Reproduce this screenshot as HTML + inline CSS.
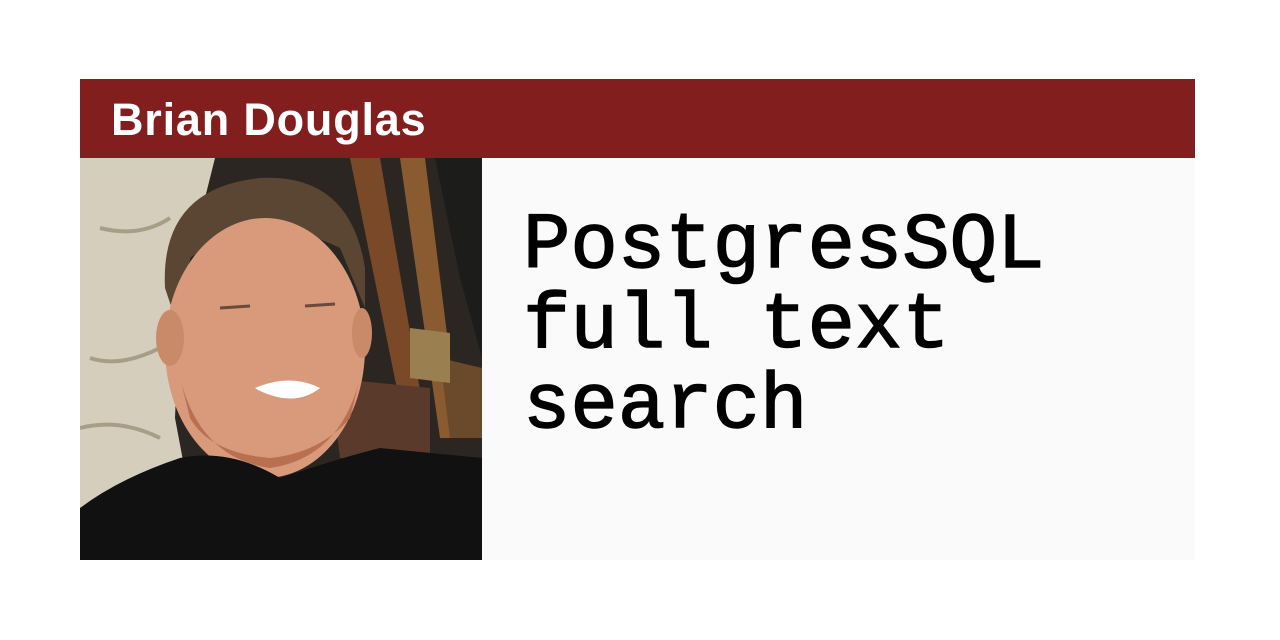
<!DOCTYPE html>
<html><head><style>
html,body{margin:0;padding:0;background:#fff;width:1280px;height:640px;overflow:hidden}
.bar{position:absolute;left:80px;top:79px;width:1115px;height:79px;background:#821e1e}
.bar span{position:absolute;left:31px;top:15px;font:bold 45px "Liberation Sans",sans-serif;color:#fff;letter-spacing:0.8px}
.photo{position:absolute;left:80px;top:158px;width:402px;height:402px;overflow:hidden}
.panel{position:absolute;left:482px;top:158px;width:713px;height:402px;background:#fafafa}
.t{position:absolute;left:523px;top:206px;font:79px/80px "Liberation Mono",monospace;color:#000;white-space:pre;-webkit-text-stroke:1.5px #000}
</style></head><body>
<div class="bar"><span>Brian Douglas</span></div>
<div class="photo">
<svg width="402" height="402" viewBox="0 0 402 402">
<rect width="402" height="402" fill="#2b2622"/>
<path d="M0 0H135L120 60L100 140L95 260L110 340L0 380Z" fill="#d6cebd"/>
<path d="M20 70Q60 80 90 60M10 200Q40 210 80 190M0 270Q40 260 80 280" stroke="#a89e88" stroke-width="4" fill="none"/>
<path d="M270 0H300L350 290L330 295Z" fill="#7a4a28"/>
<path d="M320 0H345L380 280H360Z" fill="#8a5a30"/>
<path d="M355 0H402V200L380 120Z" fill="#1c1c1a"/>
<path d="M250 220L350 230L350 300L260 300Z" fill="#5a3a2a"/>
<path d="M360 200L402 210V280L370 280Z" fill="#6a4a2a"/>
<path d="M330 170L370 175L370 225L330 220Z" fill="#9a8050"/>
<path d="M85 130Q80 30 180 20Q270 15 285 110L285 150L260 90Q180 50 110 100L95 160Z" fill="#5a4632"/>
<ellipse cx="185" cy="190" rx="100" ry="130" fill="#d89a7a"/>
<ellipse cx="90" cy="180" rx="14" ry="28" fill="#c98a6a"/>
<ellipse cx="282" cy="175" rx="10" ry="25" fill="#c98a6a"/>
<path d="M100 220Q120 300 190 310Q260 300 280 220L270 260Q240 295 190 300Q130 295 110 260Z" fill="#b87050"/>
<path d="M175 230Q210 215 240 230Q215 250 178 232Z" fill="#fff"/>
<path d="M140 150L170 148M225 148L255 146" stroke="#6a4a3a" stroke-width="3"/>
<path d="M0 402V350Q40 320 100 300Q150 290 200 320Q260 300 300 290L402 300V402Z" fill="#111"/>
</svg>
</div>
<div class="panel"></div>
<div class="t">PostgresSQL
full text
search</div>
</body></html>
